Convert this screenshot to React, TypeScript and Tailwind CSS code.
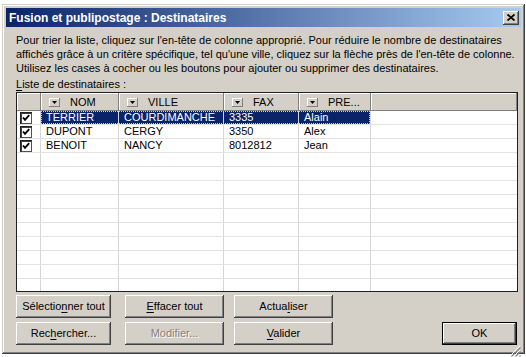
import React from "react";

const raised =
  "shadow-[inset_-1px_-1px_#404040,inset_1px_1px_#ffffff,inset_-2px_-2px_#808080,inset_2px_2px_#d4d0c8]";

function Btn({
  className,
  children,
  disabled,
  isDefault,
}: {
  className: string;
  children: React.ReactNode;
  disabled?: boolean;
  isDefault?: boolean;
}) {
  if (isDefault) {
    return (
      <div className={`h-[23px] border border-black bg-[#d4d0c8] ${className}`}>
        <div className={`w-full h-full flex items-center justify-center ${raised}`}>{children}</div>
      </div>
    );
  }
  return (
    <div
      className={`h-[23px] bg-[#d4d0c8] flex items-center justify-center ${raised} ${className} ${
        disabled ? "text-[#808080] [text-shadow:1px_1px_0_#ffffff]" : "text-black"
      }`}
    >
      {children}
    </div>
  );
}

function DropBox() {
  return (
    <div className="w-[11px] h-[9px] bg-[#d4d0c8] shadow-[inset_-1px_-1px_#808080,inset_1px_1px_#ffffff] flex items-center justify-center">
      <svg width="5" height="3" viewBox="0 0 5 3">
        <path d="M0 0h5L2.5 3z" fill="#000" />
      </svg>
    </div>
  );
}

function Hdr({ className, label }: { className: string; label?: string }) {
  return (
    <div
      className={`h-full shrink-0 bg-[#d4d0c8] shadow-[inset_-1px_-1px_#808080,inset_1px_1px_#ffffff] flex items-center ${className}`}
    >
      {label && (
        <>
          <div className="ml-[8px]">
            <DropBox />
          </div>
          <span className="ml-[10px] leading-[13px]">{label}</span>
        </>
      )}
    </div>
  );
}

function Check() {
  return (
    <div className="w-[12px] h-[12px] bg-white shadow-[inset_1px_1px_#202020,inset_2px_2px_#404040,inset_-1px_-1px_#505050] flex items-center justify-center">
      <svg width="12" height="12" viewBox="0 0 12 12">
        <polyline points="3,5.5 5,7.8 9.2,3.2" fill="none" stroke="#000" strokeWidth="1.9" />
      </svg>
    </div>
  );
}

const rows: [string, string, string, string][] = [
  ["TERRIER", "COURDIMANCHE", "3335", "Alain"],
  ["DUPONT", "CERGY", "3350", "Alex"],
  ["BENOIT", "NANCY", "8012812", "Jean"],
];

function Row({ data, selected }: { data?: [string, string, string, string]; selected?: boolean }) {
  const sel = selected ? "bg-[#0a246a] text-white" : "text-black";
  return (
    <div className="flex h-[14px] border-b border-[#e2e2e2] shrink-0 relative">
      <div className="w-[24px] shrink-0 border-r border-[#d6d6d6] flex items-center pl-[3px]">
        {data && <Check />}
      </div>
      <div className={`w-[78px] shrink-0 border-r border-[#d6d6d6] pl-[5px] leading-[13px] ${sel}`}>{data?.[0]}</div>
      <div className={`w-[105px] shrink-0 border-r border-[#d6d6d6] pl-[5px] leading-[13px] ${sel}`}>{data?.[1]}</div>
      <div className={`w-[75px] shrink-0 border-r border-[#d6d6d6] pl-[5px] leading-[13px] ${sel}`}>{data?.[2]}</div>
      <div className={`w-[72px] shrink-0 border-r border-[#d6d6d6] pl-[5px] leading-[13px] ${sel}`}>{data?.[3]}</div>
      <div className="flex-1" />
      {selected && (
        <div className="absolute left-[24px] top-0 w-[329px] h-[13px] border border-dotted border-[#c8cce0]" />
      )}
    </div>
  );
}

export default function App() {
  return (
    <div className="w-[526px] h-[357px] bg-white overflow-hidden pt-[4px] pl-[2px] font-['Liberation_Sans',Arial,sans-serif] text-[11px] text-black">
      <div className="w-[523px] h-[350px] bg-[#d4d0c8] p-[4px] flex flex-col shadow-[inset_-1px_-1px_#404040,inset_1px_1px_#d4d0c8,inset_-2px_-2px_#808080,inset_2px_2px_#ffffff]">
        {/* Title bar */}
        <div className="h-[19px] shrink-0 flex items-center bg-[linear-gradient(to_right,#0a246a,#a6caf0)] pl-[3px] pr-[2px]">
          <span className="text-white font-bold text-[12px] leading-[14px] flex-1">
            Fusion et publipostage : Destinataires
          </span>
          <div className={`w-[16px] h-[14px] bg-[#d4d0c8] flex items-center justify-center ${raised}`}>
            <svg width="8" height="7" viewBox="0 0 8 7">
              <path d="M0.5 0.5l7 6M7.5 0.5l-7 6" stroke="#000" strokeWidth="1.8" />
            </svg>
          </div>
        </div>

        {/* Body */}
        <div className="flex-1 flex flex-col pl-[10px] pr-[3px] pt-[6px]">
          <div className="leading-[14px]">
            <div>
              Pour trier la liste, cliquez sur l'en-tête de colonne approprié. Pour réduire le nombre de destinataires
            </div>
            <div>
              affichés grâce à un critère spécifique, tel qu'une ville, cliquez sur la flèche près de l'en-tête de colonne.
            </div>
            <div>Utilisez les cases à cocher ou les boutons pour ajouter ou supprimer des destinataires.</div>
          </div>
          <div className="leading-[14px] mt-[2px]">
            <span className="underline underline-offset-2">L</span>iste de destinataires :
          </div>

          {/* List */}
          <div className="mt-[1px] w-[502px] h-[200px] border border-[#202020] bg-white flex flex-col overflow-hidden">
            <div className="h-[18px] shrink-0 flex">
              <Hdr className="w-[24px]" />
              <Hdr className="w-[78px]" label="NOM" />
              <Hdr className="w-[105px]" label="VILLE" />
              <Hdr className="w-[75px]" label="FAX" />
              <Hdr className="w-[72px]" label="PRE..." />
              <Hdr className="flex-1" />
            </div>
            {rows.map((r, i) => (
              <Row key={i} data={r} selected={i === 0} />
            ))}
            {Array.from({ length: 11 }).map((_, i) => (
              <Row key={"e" + i} />
            ))}
          </div>

          {/* Buttons */}
          <div className="mt-[3px] flex gap-[14px]">
            <Btn className="w-[95px]">
              <span>
                Sélectio<span className="underline underline-offset-2">n</span>ner tout
              </span>
            </Btn>
            <Btn className="w-[99px]">
              <span>
                <span className="underline underline-offset-2">E</span>ffacer tout
              </span>
            </Btn>
            <Btn className="w-[99px] -ml-[4px]">
              <span>
                Actua<span className="underline underline-offset-2">l</span>iser
              </span>
            </Btn>
          </div>
          <div className="mt-[4px] flex gap-[14px] items-end">
            <Btn className="w-[95px]">
              <span>
                Rec<span className="underline underline-offset-2">h</span>ercher...
              </span>
            </Btn>
            <Btn className="w-[99px]" disabled>
              <span>Modifier...</span>
            </Btn>
            <Btn className="w-[99px] -ml-[4px]">
              <span>
                <span className="underline underline-offset-2">V</span>alider
              </span>
            </Btn>
            <div className="flex-1" />
            <Btn className="w-[75px] mr-[1px]" isDefault>
              <span>OK</span>
            </Btn>
          </div>
          <div className="flex-1 flex justify-end items-end">
            <svg width="12" height="12" viewBox="0 0 12 12" className="-mr-[3px]">
              <path d="M11 1L1 11M11 5L5 11M11 9L9 11" stroke="#ffffff" strokeWidth="1" />
              <path d="M11.5 2.5L2.5 11.5M11.5 6.5L6.5 11.5M11.5 10.5L10.5 11.5" stroke="#808080" strokeWidth="1.2" />
            </svg>
          </div>
        </div>
      </div>
    </div>
  );
}
